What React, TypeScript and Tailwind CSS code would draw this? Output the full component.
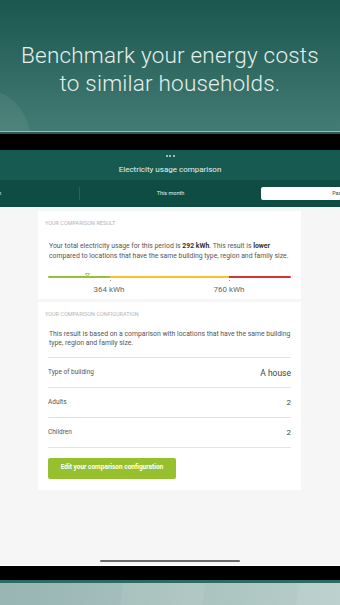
import React from "react";

const F = { fontFamily: "Roboto, 'Open Sans', sans-serif" };

function Row({ label, value, big }: { label: string; value: string; big?: boolean }) {
  return (
    <div className="h-[30px] flex items-center justify-between border-b border-[#e3e3e3] pt-[2px]">
      <span className="text-[6.5px] text-[#555]">{label}</span>
      <span className={big ? "text-[8.5px] text-[#444]" : "text-[8px] text-[#444]"}>{value}</span>
    </div>
  );
}

export default function App() {
  return (
    <div className="w-[340px] h-[605px] overflow-hidden flex flex-col bg-black" style={F}>
      {/* Hero */}
      <div className="h-[131px] relative overflow-hidden bg-gradient-to-b from-[#1b574f] to-[#427c74] flex flex-col items-center justify-center pt-[7px]">
        <div className="absolute left-[-70px] top-[88px] w-[100px] h-[100px] rounded-full bg-[#ffffff10]" />
        <p className="relative text-[22.5px] leading-[28px] font-light text-[#e6efec] text-center tracking-[0.2px]">
          Benchmark your energy costs
          <br />
          to similar households.
        </p>
      </div>
      <div className="h-px bg-[#9fb8b2]" />
      <div className="h-[2px] bg-[#2c5a54]" />
      <div className="h-[16px] bg-black" />

      {/* App header */}
      <div className="h-[30px] bg-[#175a51] flex flex-col items-center">
        <div className="flex gap-[1.5px] mt-[5px]">
          <span className="w-[2px] h-[2px] bg-[#cfe0dc] rounded-full" />
          <span className="w-[2px] h-[2px] bg-[#cfe0dc] rounded-full" />
          <span className="w-[2px] h-[2px] bg-[#cfe0dc] rounded-full" />
        </div>
        <span className="text-[8px] text-[#e9f1ef] mt-[9px] leading-none">Electricity usage comparison</span>
      </div>

      {/* Tabs */}
      <div className="h-[27px] bg-[#0f4c44] overflow-hidden flex items-center">
        <div className="flex items-center ml-[-101px] shrink-0">
          <div className="w-[181px] h-[13px] flex items-center justify-center text-[5.5px] text-[#e6efec] border-r border-[#2a6259]">
            Last week
          </div>
          <div className="w-[181px] h-[13px] flex items-center justify-center text-[5.5px] text-[#e6efec]">This month</div>
          <div className="w-[181px] h-[13px] flex items-center justify-center text-[5.5px] text-[#1d5a52] bg-white rounded-[2px]">
            Past 12 months
          </div>
        </div>
      </div>

      {/* Content */}
      <div className="h-[358px] bg-[#f6f6f6] flex flex-col items-start pl-[38px] pt-[4px]">
        <div className="w-[263px] bg-white h-[88px] flex flex-col">
          <div className="text-[5.5px] text-[#b5b5b5] uppercase pl-[7px] pt-[10px] leading-none">Your comparison result</div>
          <p className="text-[6.85px] leading-[10px] text-[#555] pl-[11px] pr-[6px] mt-[14px]">
            Your total electricity usage for this period is <b className="text-[#333]">292 kWh</b>. This result is{" "}
            <b className="text-[#333]">lower</b> compared to locations that have the same building type, region and family size.
          </p>
          <div className="relative mx-[10px] mt-[15px]">
            <div className="flex h-[2px]">
              <div className="w-[62px] bg-[#97c13a] rounded-l-full" />
              <div className="w-[119px] bg-[#fbbf2a]" />
              <div className="flex-1 bg-[#d5343c] rounded-r-full" />
            </div>
            <svg className="absolute left-[37px] top-[-3px]" width="5" height="4" viewBox="0 0 5 4">
              <path d="M0.5 0.5 L4.5 0.5 L2.5 3.5 Z" fill="#fff" stroke="#8fb93a" strokeWidth="0.8" />
            </svg>
            <div className="absolute left-[61.5px] top-[4px] w-px h-[1.5px] bg-[#999]" />
            <div className="absolute left-[180.5px] top-[4px] w-px h-[1.5px] bg-[#999]" />
            <div className="absolute left-[41px] top-[9px] w-[40px] text-center text-[8px] leading-[10px] text-[#666]">364 kWh</div>
            <div className="absolute left-[161px] top-[9px] w-[40px] text-center text-[8px] leading-[10px] text-[#666]">760 kWh</div>
          </div>
        </div>

        <div className="w-[263px] bg-white h-[188px] mt-[3px] flex flex-col">
          <div className="text-[5.5px] text-[#b5b5b5] uppercase pl-[7px] pt-[10px] leading-none">Your comparison configuration</div>
          <div className="px-[10px] mt-[12px]">
            <p className="text-[6.85px] leading-[9.5px] text-[#555] pl-px pb-[8px] border-b border-[#e3e3e3]">
              This result is based on a comparison with locations that have the same building type, region and family size.
            </p>
            <Row label="Type of building" value="A house" big />
            <Row label="Adults" value="2" />
            <Row label="Children" value="2" />
            <button className="mt-[10px] w-[128px] h-[21px] bg-[#97c02f] rounded-[2px] text-[6.5px] font-bold text-white flex items-center justify-center">
              Edit your comparison configuration
            </button>
          </div>
        </div>

        <div className="self-center mt-auto mb-[3px] w-[140px] h-[2px] rounded-full bg-[#6a6a6a] -ml-[38px]" />
      </div>

      {/* Bottom bezel */}
      <div className="h-px bg-white" />
      <div className="h-[14px] bg-black" />
      <div className="h-[3px] bg-[#2f6b66]" />
      <div className="h-[22px] relative overflow-hidden bg-gradient-to-r from-[#98b5b1] to-[#b8ceca]">
        <div className="absolute left-[122px] top-0 h-full w-[82px] bg-[#ffffff12] skew-x-[-8deg]" />
        <div className="absolute left-[298px] top-0 h-full w-[60px] bg-[#ffffff14] skew-x-[-8deg]" />
      </div>
    </div>
  );
}
